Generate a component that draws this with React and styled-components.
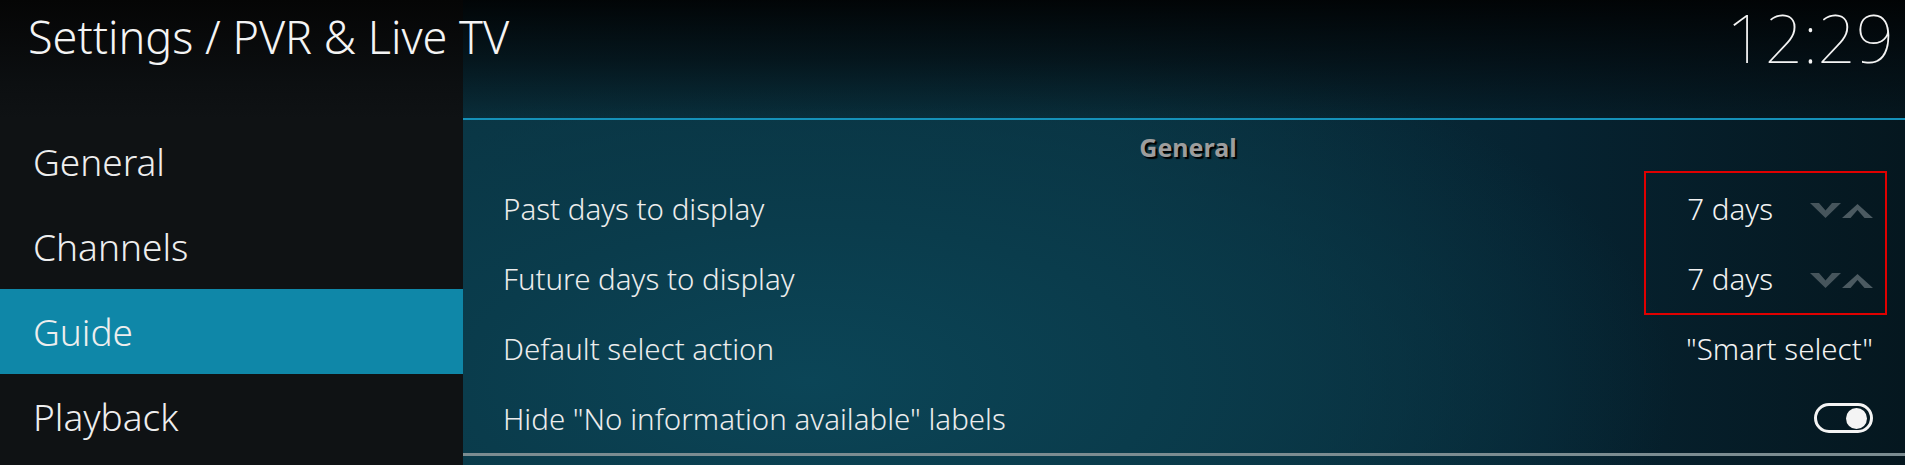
import React from "react";
import styled, { createGlobalStyle } from "styled-components";

const GlobalStyle = createGlobalStyle`
  html, body {
    margin: 0;
    padding: 0;
    background: #050505;
  }
  body {
    font-family: "Noto Sans", "Open Sans", "DejaVu Sans", sans-serif;
    color: #f0f0f0;
  }
`;

const menu = ["General", "Channels", "Guide", "Playback"];

const settings = [
  { label: "Past days to display", value: "7 days", kind: "spinner" },
  { label: "Future days to display", value: "7 days", kind: "spinner" },
  { label: "Default select action", value: "\"Smart select\"", kind: "text" },
  { label: "Hide \"No information available\" labels", kind: "toggle", on: true },
];

// spinner arrows, drawn as thick flat-ended chevrons
const ChevronDown = () => (
  <svg width="31" height="15" viewBox="0 0 31 15">
    <polygon points="0,0 9,0 15.5,7.5 22,0 31,0 15.5,15" fill="#46555c" />
  </svg>
);

const ChevronUp = () => (
  <svg width="31" height="14" viewBox="0 0 31 14">
    <polygon points="0,14 8.5,14 15.5,6 22.5,14 31,14 15.5,0" fill="#4b5a61" />
  </svg>
);

const App = () => {
  return (
    <>
      <GlobalStyle />
      <Screen>
        <Sidebar>
          <TitleBar>
            <Title>Settings / PVR &amp; Live TV</Title>
          </TitleBar>
          <Menu>
            {menu.map((item) => (
              <MenuItem key={item} active={item === "Guide"}>
                {item}
              </MenuItem>
            ))}
          </Menu>
        </Sidebar>

        <Main>
          <TopBar>
            <Clock>12:29</Clock>
          </TopBar>
          <AccentRule />
          <SectionHeading>General</SectionHeading>
          <RowList>
            {settings.map((s) => (
              <Row key={s.label}>
                <Label>{s.label}</Label>
                {s.kind === "spinner" && (
                  <ValueGroup>
                    <Value>{s.value}</Value>
                    <Spinner>
                      <ChevronDown />
                      <ChevronUp />
                    </Spinner>
                  </ValueGroup>
                )}
                {s.kind === "text" && <Value>{s.value}</Value>}
                {s.kind === "toggle" && (
                  <Toggle on={s.on}>
                    <Knob />
                  </Toggle>
                )}
              </Row>
            ))}
            <Highlight />
          </RowList>
          <BottomRule />
        </Main>
      </Screen>
    </>
  );
};

const Screen = styled.div`
  display: grid;
  grid-template-columns: 463px 1fr;
  width: 1905px;
  height: 465px;
  overflow: hidden;
`;

const Sidebar = styled.aside`
  display: flex;
  flex-direction: column;
  background: #0f1214;
  position: relative;
  z-index: 2;
`;

const TitleBar = styled.div`
  height: 119px;
  box-sizing: border-box;
  padding: 6px 0 0 28px;
  background: linear-gradient(to bottom, #050505 0%, #0c0f11 70%, #0f1214 100%);
`;

const Title = styled.h1`
  margin: 0;
  font-size: 45px;
  font-weight: 300;
  line-height: normal;
  white-space: nowrap;
  color: #f4f4f4;
`;

const Menu = styled.nav`
  display: flex;
  flex-direction: column;
`;

const MenuItem = styled.div`
  height: 85px;
  display: flex;
  align-items: center;
  padding-left: 33px;
  font-size: 37px;
  font-weight: 300;
  color: #eeeeee;
  background: ${(p) => (p.active ? "#0f87a8" : "transparent")};
`;

const Main = styled.main`
  display: flex;
  flex-direction: column;
  background:
    radial-gradient(ellipse 60% 85% at 24% 82%, #0b4557 0%, #0a3c4c 40%, rgba(9, 52, 66, 0) 100%),
    linear-gradient(90deg, #0a3341 0%, #09303e 45%, #062331 75%, #05171f 100%);
`;

const TopBar = styled.header`
  height: 118px;
  box-sizing: border-box;
  display: flex;
  justify-content: flex-end;
  align-items: flex-start;
  padding: 0 11px 0 0;
  background: linear-gradient(to bottom, rgba(1, 3, 4, 0.96) 0%, rgba(3, 10, 14, 0.72) 50%, rgba(6, 20, 26, 0.25) 100%);
`;

const Clock = styled.div`
  font-size: 67px;
  font-weight: 100;
  line-height: 1.12;
  color: #f4f4f4;
`;

const AccentRule = styled.div`
  height: 2px;
  background: #1591b9;
`;

const SectionHeading = styled.h2`
  margin: 0;
  height: 53px;
  display: flex;
  align-items: center;
  justify-content: center;
  padding: 0 32px 0 40px;
  font-size: 25px;
  font-weight: 700;
  color: #9d9d9d;
  text-shadow: 2px 2px 1px #000;
`;

const RowList = styled.div`
  position: relative;
  display: flex;
  flex-direction: column;
  padding: 0 32px 0 40px;
`;

const Row = styled.div`
  height: 70px;
  display: flex;
  align-items: center;
  justify-content: space-between;
  font-size: 29.5px;
  font-weight: 300;
`;

const Label = styled.span`
  color: #ececec;
`;

const Value = styled.span`
  color: #f2f2f2;
`;

const ValueGroup = styled.div`
  display: flex;
  align-items: center;
`;

const Spinner = styled.div`
  display: flex;
  align-items: flex-end;
  gap: 1px;
  margin-left: 37px;
  padding-top: 4px;
`;

const Toggle = styled.div`
  width: 59px;
  height: 30px;
  box-sizing: border-box;
  border: 3px solid #f4f4f4;
  border-radius: 15px;
  display: flex;
  align-items: center;
  justify-content: ${(p) => (p.on ? "flex-end" : "flex-start")};
  padding: 0 3px;
`;

const Knob = styled.div`
  width: 21px;
  height: 21px;
  border-radius: 50%;
  background: #f4f4f4;
`;

const Highlight = styled.div`
  position: absolute;
  top: -2px;
  right: 18px;
  width: 243px;
  height: 144px;
  box-sizing: border-box;
  border: 2px solid #e00000;
  pointer-events: none;
`;

const BottomRule = styled.div`
  height: 3px;
  background: #7b8c91;
`;

export default App;
